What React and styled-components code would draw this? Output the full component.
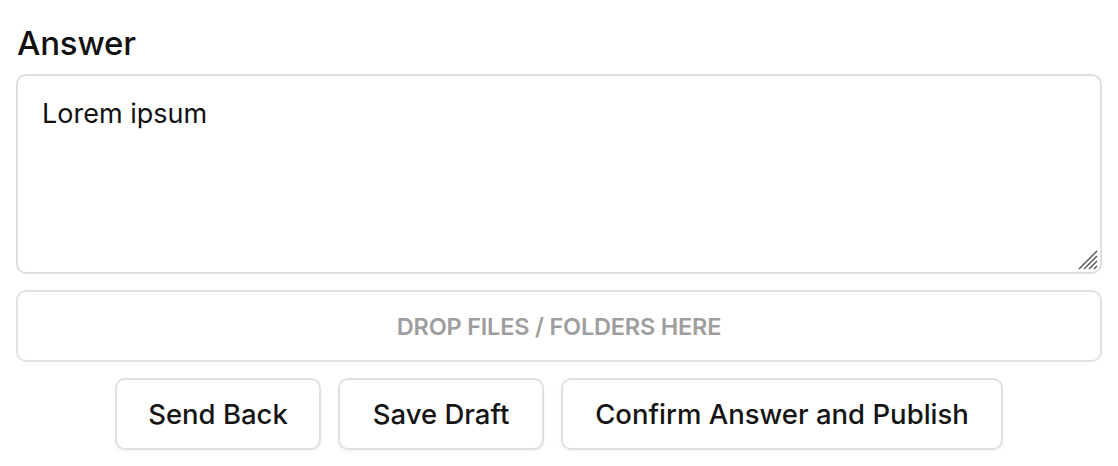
import styled, { createGlobalStyle } from "styled-components";

const GlobalStyle = createGlobalStyle`
  body {
    margin: 0;
    background: #fff;
    font-family: Inter, "Noto Sans", sans-serif;
    color: #111;
  }
`;

const Wrapper = styled.div`
  padding: 16px;
  display: flex;
  flex-direction: column;
`;

const Title = styled.h2`
  margin: 2px 0 6px 1px;
  font-size: 33px;
  font-weight: 500;
  line-height: 50px;
  letter-spacing: -0.2px;
`;

const Field = styled.div`
  position: relative;
`;

const TextArea = styled.textarea`
  display: block;
  box-sizing: border-box;
  width: 100%;
  height: 200px;
  padding: 20px 24px;
  border: 2px solid #dedede;
  border-radius: 10px;
  font-family: inherit;
  font-size: 27px;
  line-height: 36px;
  color: #111;
  resize: none;
  outline: none;
`;

const Grip = styled.svg`
  position: absolute;
  right: 4px;
  bottom: 4px;
  pointer-events: none;
`;

const DropZone = styled.div`
  box-sizing: border-box;
  margin-top: 16px;
  height: 72px;
  border: 2px solid #e2e2e2;
  border-radius: 10px;
  display: flex;
  align-items: center;
  justify-content: center;
  color: #9e9e9e;
  font-size: 23.5px;
  font-weight: 600;
  letter-spacing: -0.2px;
`;

const Actions = styled.div`
  margin-top: 16px;
  display: flex;
  justify-content: center;
  gap: 17px;
`;

const Button = styled.button`
  box-sizing: border-box;
  height: 72px;
  width: ${(p) => p.$width}px;
  background: #fff;
  border: 2px solid #e0e0e0;
  border-radius: 10px;
  box-shadow: 0 2px 4px rgba(0, 0, 0, 0.04);
  font-family: inherit;
  font-size: 27.5px;
  font-weight: 500;
  color: #151515;
  cursor: pointer;
`;

const App = () => {
  return (
    <Wrapper>
      <GlobalStyle />
      <Title>Answer</Title>
      <Field>
        <TextArea defaultValue="Lorem ipsum" />
        <Grip width="20" height="20" viewBox="0 0 20 20">
          <g stroke="#555" strokeWidth="1.4">
            <line x1="1" y1="19" x2="19" y2="1" />
            <line x1="6" y1="19" x2="19" y2="6" />
            <line x1="11" y1="19" x2="19" y2="11" />
            <line x1="16" y1="19" x2="19" y2="16" />
          </g>
        </Grip>
      </Field>
      <DropZone>DROP FILES / FOLDERS HERE</DropZone>
      <Actions>
        <Button $width={206}>Send Back</Button>
        <Button $width={206}>Save Draft</Button>
        <Button $width={442}>Confirm Answer and Publish</Button>
      </Actions>
    </Wrapper>
  );
};

export default App;
